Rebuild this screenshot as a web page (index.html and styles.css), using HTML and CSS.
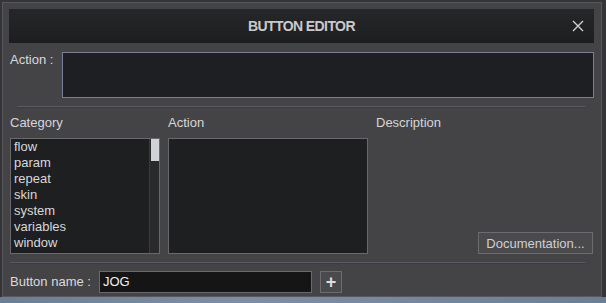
FILE: index.html
```html
<!DOCTYPE html>
<html lang="en">

<head>
  <meta charset="UTF-8">
  <meta name="viewport" content="width=device-width, initial-scale=1.0">
  <title>Button Editor</title>
  <link rel="stylesheet" href="styles.css">
</head>

<body>
  <div class="dialog">
    <div class="title-bar">
      <span class="title">BUTTON EDITOR</span>
      <svg class="close" width="12" height="12" viewBox="0 0 12 12">
        <path d="M1 1 L11 11 M11 1 L1 11" stroke="#d2d2d4" stroke-width="1.4" fill="none"/>
      </svg>
    </div>

    <div class="action-row">
      <label class="row-label">Action :</label>
      <div class="action-input"></div>
    </div>

    <div class="separator sep-top"></div>

    <div class="columns">
      <div class="col col-category">
        <div class="col-title">Category</div>
        <div class="list">
          <div class="list-items">
            <div>flow</div>
            <div>param</div>
            <div>repeat</div>
            <div>skin</div>
            <div>system</div>
            <div>variables</div>
            <div>window</div>
          </div>
          <div class="scrollbar"><div class="thumb"></div></div>
        </div>
      </div>
      <div class="col col-action">
        <div class="col-title">Action</div>
        <div class="list"></div>
      </div>
      <div class="col col-desc">
        <div class="col-title">Description</div>
        <div class="desc-body">
          <button class="doc-button">Documentation...</button>
        </div>
      </div>
    </div>

    <div class="separator sep-bottom"></div>

    <div class="name-row">
      <label class="row-label">Button name :</label>
      <div class="name-input">JOG</div>
      <button class="plus-button">+</button>
    </div>
  </div>
  <div class="page-strip"></div>
</body>

</html>
```

FILE: styles.css
```css
body {
  margin: 0;
  width: 606px;
  height: 303px;
  overflow: hidden;
  background: #353537;
  font-family: "Liberation Sans", Arial, sans-serif;
  font-size: 13px;
  color: #d6d6d8;
}

.dialog {
  margin: 2px 0 0 2px;
  border: 1px solid #58585c;
  background: #444447;
  padding: 6px 7px 0 6px;
  box-sizing: border-box;
  width: 600px;
  height: 295px;
  display: flex;
  flex-direction: column;
}

.title-bar {
  height: 34px;
  flex-shrink: 0;
  background: linear-gradient(#262729, #1d1e20);
  display: flex;
  align-items: center;
  justify-content: center;
  position: relative;
}

.title {
  font-weight: bold;
  font-size: 14px;
  letter-spacing: -0.6px;
  color: #cacacc;
}

.close {
  position: absolute;
  right: 10px;
  top: 11px;
}

.action-row {
  display: flex;
  margin-top: 9px;
  padding-left: 1px;
}

.row-label {
  line-height: 16px;
  color: #dadadc;
}

.action-row .row-label {
  width: 52px;
}

.action-input {
  width: 532px;
  height: 46px;
  box-sizing: border-box;
  background: #1e1f22;
  border: 1px solid #7a7f98;
}

.separator {
  height: 1px;
  background: #5d5a66;
  border-bottom: 1px solid #3c3c3f;
}

.sep-top {
  margin: 8px 9px 0 8px;
}

.columns {
  display: flex;
  margin-top: 7px;
  padding-left: 1px;
}

.col-title {
  line-height: 16px;
  height: 16px;
  margin-bottom: 7px;
  color: #d6d6d8;
}

.col-category {
  width: 158px;
}

.col-action {
  width: 208px;
}

.col-desc {
  flex: 1;
  display: flex;
  flex-direction: column;
}

.list {
  height: 116px;
  box-sizing: border-box;
  background: #1e1f21;
  border: 1px solid #69696d;
  display: flex;
}

.col-category .list {
  width: 150px;
}

.col-action .list {
  width: 200px;
}

.list-items {
  flex: 1;
  padding-left: 3px;
  line-height: 16px;
  color: #d8d8da;
}

.scrollbar {
  width: 9px;
  border-left: 1px solid #3a3a3d;
  background: #2a2a2d;
}

.thumb {
  margin-left: 1px;
  width: 8px;
  height: 22px;
  background: #d2d2d6;
}

.desc-body {
  flex: 1;
  display: flex;
  justify-content: flex-end;
  align-items: flex-end;
}

.doc-button {
  width: 115px;
  height: 22px;
  margin-right: 1px;
  background: #4a4a4d;
  border: 1px solid #6c6c70;
  color: #cfcfd1;
  font-family: "Liberation Sans", Arial, sans-serif;
  font-size: 13px;
  padding: 0;
}

.sep-bottom {
  margin: 8px 9px 0 1px;
}

.name-row {
  display: flex;
  align-items: center;
  margin-top: 7px;
  padding-left: 1px;
}

.name-row .row-label {
  width: 89px;
}

.name-input {
  width: 213px;
  height: 22px;
  box-sizing: border-box;
  background: #151516;
  border: 1px solid #6a6a6e;
  padding-left: 3px;
  line-height: 20px;
  color: #f2f2f2;
}

.plus-button {
  margin-left: 8px;
  width: 22px;
  height: 22px;
  background: #4a4a4d;
  border: 1px solid #6c6c70;
  color: #dedee0;
  font-family: "Liberation Sans", Arial, sans-serif;
  font-size: 18px;
  font-weight: bold;
  line-height: 18px;
  padding: 0;
}

.page-strip {
  height: 10px;
  background: linear-gradient(90deg, #6b7e98, #7d8fa8 40%, #6b7e98);
}
```
